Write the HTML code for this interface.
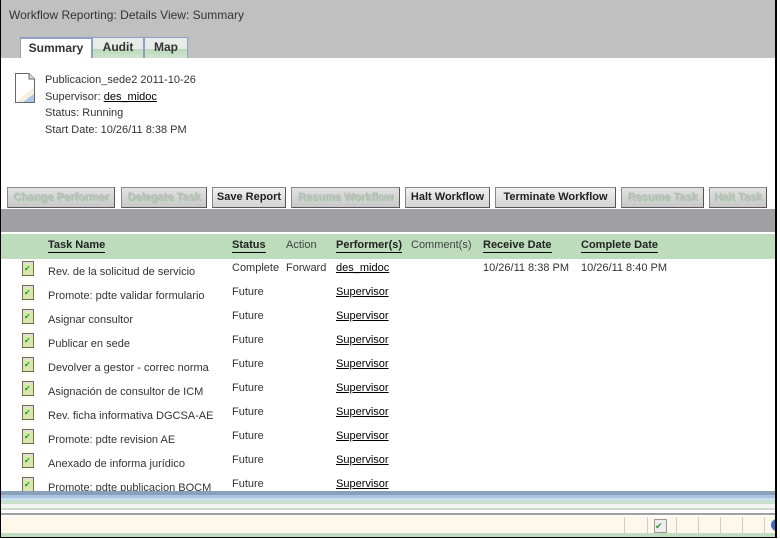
<!DOCTYPE html>
<html><head><style>
body{margin:0;width:780px;height:539px;overflow:hidden;background:#fff;font-family:"Liberation Sans",sans-serif;font-size:11px;color:#333;position:relative}
.frame{position:absolute;left:0;top:0;width:777px;height:538px;border-left:1px solid #000;border-right:2px solid #000;border-bottom:1px solid #000;box-sizing:border-box}
.top{position:absolute;left:1px;top:0;width:776px;height:58px;background:#c0c0c0}
.title{position:absolute;left:8px;top:8px;font-size:12px;color:#333}
.tab{position:absolute;top:37px;height:21px;box-sizing:border-box;border:1px solid #8ea0c8;border-bottom:none;background:linear-gradient(#e8ece8 0,#e8ece8 55%,#b9d8b9 55%,#cfe4cf 100%);font-size:12px;font-weight:bold;color:#333;text-align:center;line-height:19px}
.tab.on{background:#fff;border-top:2px solid #8ea0c8;line-height:18px}
.info{position:absolute;left:45px;top:72px;line-height:16.5px;font-size:11px}
.info u{color:#000}
.btn{position:absolute;top:187px;height:21px;box-sizing:border-box;border:1px solid #888;border-right-color:#555;border-bottom-color:#555;background:linear-gradient(#e2e2e2,#c8c8c8);font-size:11px;font-weight:bold;line-height:19px;text-align:center;color:#c0c0c0;text-shadow:1px 1px 0 #9fc89f}
.btn.en{color:#222;text-shadow:none;background:linear-gradient(#f0f0f0,#d4d4d4)}
.dark{position:absolute;left:1px;top:209px;width:776px;height:23px;background:#a0a0a4}
.hdr{position:absolute;left:1px;top:234px;width:776px;height:25px;background:#bcdcbc}
.h{position:absolute;top:239px;font-size:11px;font-weight:bold;color:#222}
.h.u{border-bottom:1px solid #000;line-height:13px}
.h.n{font-weight:normal;color:#444}
.row{position:absolute;left:0;width:776px;height:24px}
.row .ic{position:absolute;left:22px;top:0;width:12px;height:15px;background:linear-gradient(#ddd 0,#ddd 2px,#d8e8b0 2px);border:1px solid #7a6a40;box-sizing:border-box}
.row .ic:after{content:"✔";position:absolute;left:1px;top:2px;font-size:8px;color:#2a9a2a;line-height:9px}
.row span{position:absolute}
.row u{color:#000}
.s1,.s2,.s3,.s4,.s5,.s6{position:absolute;left:1px;width:776px}
</style></head><body>
<div class="top"><div class="title">Workflow Reporting: Details View: Summary</div></div>
<div class="tab on" style="left:20px;width:72px">Summary</div>
<div class="tab" style="left:92px;width:52px">Audit</div>
<div class="tab" style="left:144px;width:44px">Map</div>
<svg style="position:absolute;left:15px;top:73px" width="20" height="30"><path d="M0.5 0.5H14L19.5 6V29.5H0.5Z" fill="#fff" stroke="#666"/><path d="M14 0.5V6H19.5" fill="#ddd" stroke="#666"/><path d="M1 29L19 14V29Z" fill="#f5f0e0"/><path d="M8 29L19 21V29Z" fill="#a8c8e8"/></svg>
<div class="info">Publicacion_sede2 2011-10-26<br>Supervisor: <u>des_midoc</u><br>Status: Running<br>Start Date: 10/26/11 8:38 PM</div>
<div class="btn" style="left:7px;width:108px">Change Performer</div>
<div class="btn" style="left:121px;width:86px">Delegate Task</div>
<div class="btn en" style="left:212px;width:74px">Save Report</div>
<div class="btn" style="left:291px;width:109px">Resume Workflow</div>
<div class="btn en" style="left:405px;width:85px">Halt Workflow</div>
<div class="btn en" style="left:495px;width:121px">Terminate Workflow</div>
<div class="btn" style="left:621px;width:83px">Resume Task</div>
<div class="btn" style="left:709px;width:58px">Halt Task</div>
<div class="dark"></div>
<div class="hdr"></div>
<div class="h u" style="left:48px">Task Name</div>
<div class="h u" style="left:232px">Status</div>
<div class="h n" style="left:286px">Action</div>
<div class="h u" style="left:336px">Performer(s)</div>
<div class="h n" style="left:411px">Comment(s)</div>
<div class="h u" style="left:483px">Receive Date</div>
<div class="h u" style="left:581px">Complete Date</div>

<div class="row" style="top:261px"><div class="ic"></div><span style="left:48px;top:5px">Rev. de la solicitud de servicio</span><span style="left:232px;top:1px">Complete</span><span style="left:286px;top:1px">Forward</span><span style="left:336px;top:1px"><u>des_midoc</u></span><span style="left:483px;top:1px">10/26/11 8:38 PM</span><span style="left:581px;top:1px">10/26/11 8:40 PM</span></div>
<div class="row" style="top:285px"><div class="ic"></div><span style="left:48px;top:5px">Promote: pdte validar formulario</span><span style="left:232px;top:1px">Future</span><span style="left:336px;top:1px"><u>Supervisor</u></span></div>
<div class="row" style="top:309px"><div class="ic"></div><span style="left:48px;top:5px">Asignar consultor</span><span style="left:232px;top:1px">Future</span><span style="left:336px;top:1px"><u>Supervisor</u></span></div>
<div class="row" style="top:333px"><div class="ic"></div><span style="left:48px;top:5px">Publicar en sede</span><span style="left:232px;top:1px">Future</span><span style="left:336px;top:1px"><u>Supervisor</u></span></div>
<div class="row" style="top:357px"><div class="ic"></div><span style="left:48px;top:5px">Devolver a gestor - correc norma</span><span style="left:232px;top:1px">Future</span><span style="left:336px;top:1px"><u>Supervisor</u></span></div>
<div class="row" style="top:381px"><div class="ic"></div><span style="left:48px;top:5px">Asignación de consultor de ICM</span><span style="left:232px;top:1px">Future</span><span style="left:336px;top:1px"><u>Supervisor</u></span></div>
<div class="row" style="top:405px"><div class="ic"></div><span style="left:48px;top:5px">Rev. ficha informativa DGCSA-AE</span><span style="left:232px;top:1px">Future</span><span style="left:336px;top:1px"><u>Supervisor</u></span></div>
<div class="row" style="top:429px"><div class="ic"></div><span style="left:48px;top:5px">Promote: pdte revision AE</span><span style="left:232px;top:1px">Future</span><span style="left:336px;top:1px"><u>Supervisor</u></span></div>
<div class="row" style="top:453px"><div class="ic"></div><span style="left:48px;top:5px">Anexado de informa jurídico</span><span style="left:232px;top:1px">Future</span><span style="left:336px;top:1px"><u>Supervisor</u></span></div>
<div class="row" style="top:477px"><div class="ic"></div><span style="left:48px;top:5px">Promote: pdte publicacion BOCM</span><span style="left:232px;top:1px">Future</span><span style="left:336px;top:1px"><u>Supervisor</u></span></div>

<div class="s1" style="top:491px;height:4px;background:#8aa0b8"></div>
<div class="s2" style="top:495px;height:3px;background:#a8c4e0"></div>
<div class="s3" style="top:498px;height:3px;background:#c8dcec"></div>
<div class="s4" style="top:501px;height:3px;background:#c8e0c8"></div>
<div class="s5" style="top:504px;height:4px;background:#f4f4f4"></div>
<div class="s6" style="top:508px;height:2px;background:#c8dcc8"></div>
<div class="s6" style="top:513px;height:2px;background:#a0a0a0"></div>
<div class="s6" style="top:517px;height:16px;background:#fdf8ea"></div>
<div class="s6" style="top:533px;height:5px;background:#c0dcc0"></div>
<div style="position:absolute;top:517px;left:624px;width:1px;height:16px;background:#ccc"></div>
<div style="position:absolute;top:517px;left:647px;width:1px;height:16px;background:#ccc"></div>
<div style="position:absolute;top:517px;left:676px;width:1px;height:16px;background:#ccc"></div>
<div style="position:absolute;top:517px;left:698px;width:1px;height:16px;background:#ccc"></div>
<div style="position:absolute;top:517px;left:720px;width:1px;height:16px;background:#ccc"></div>
<div style="position:absolute;top:517px;left:742px;width:1px;height:16px;background:#ccc"></div>
<div style="position:absolute;top:517px;left:764px;width:1px;height:16px;background:#ccc"></div>
<div style="position:absolute;top:519px;left:654px;width:11px;height:12px;border:1px solid #999;background:#eee;font-size:9px;color:#2a9a2a;line-height:12px">✔</div>
<div style="position:absolute;top:519px;left:771px;width:6px;height:12px;background:#3a70c0;border-radius:6px 0 0 6px"></div>
<div class="frame"></div>
</body></html>
